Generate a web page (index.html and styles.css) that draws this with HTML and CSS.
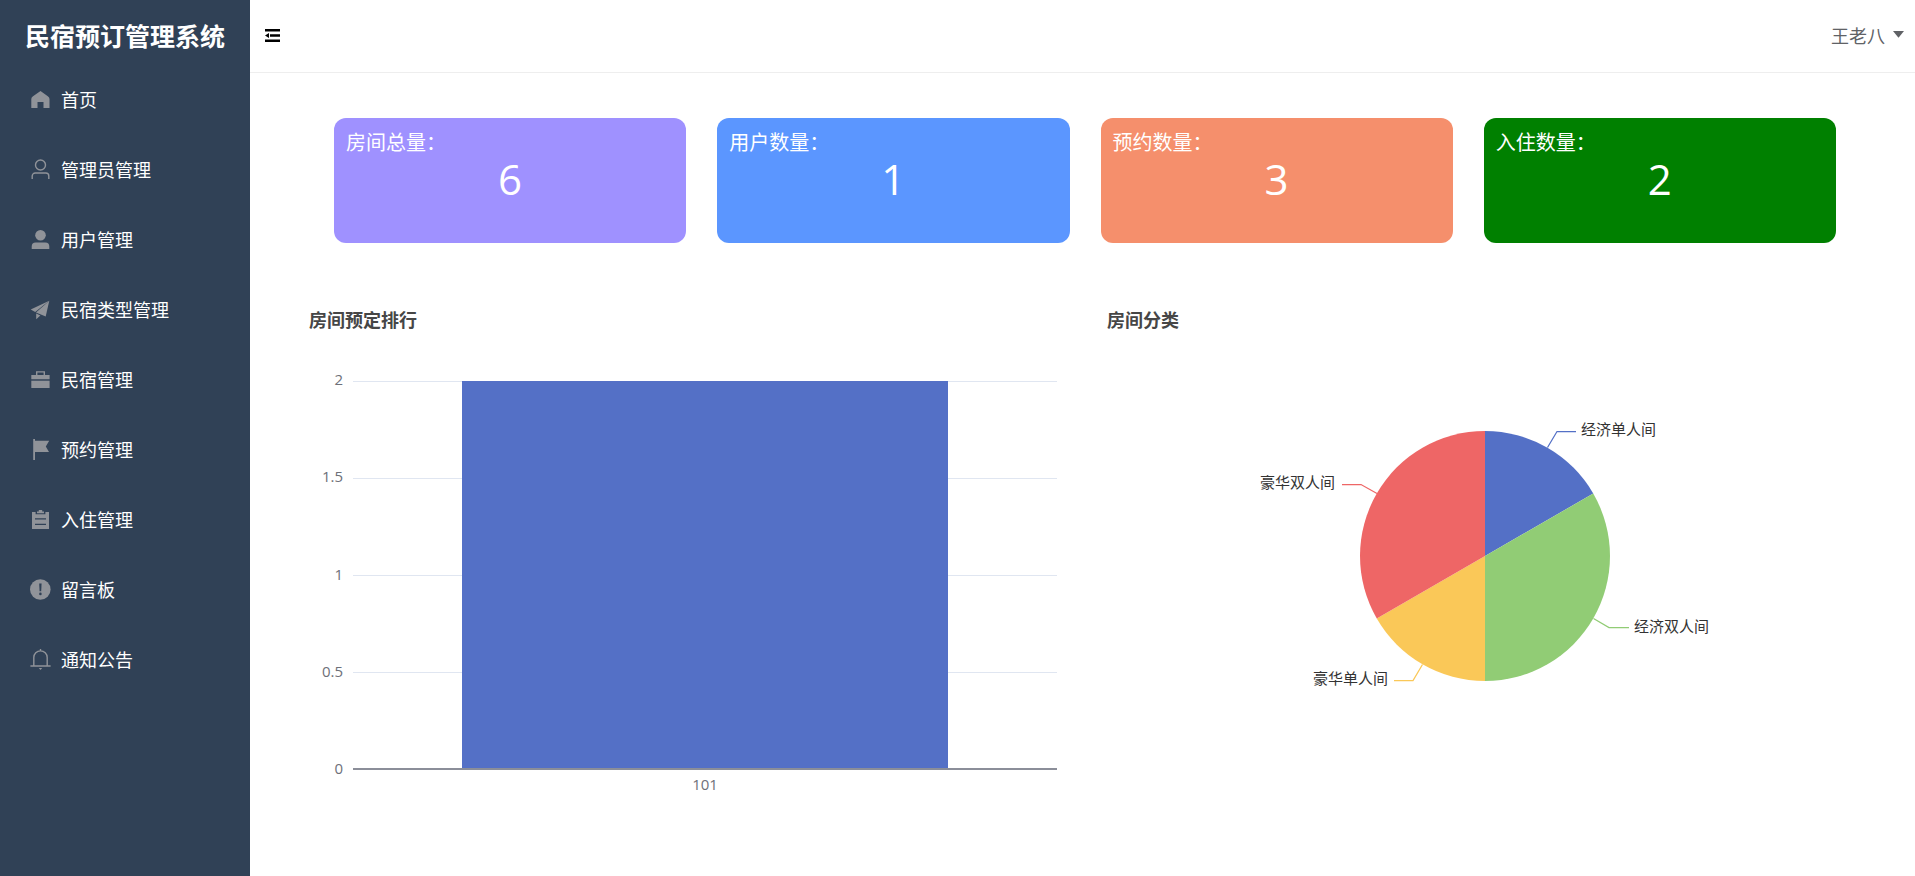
FILE: index.html
```html
<!DOCTYPE html>
<html lang="zh-CN">
<head>
<meta charset="utf-8">
<title>民宿预订管理系统</title>
<link rel="stylesheet" href="styles.css">
</head>
<body>
<div class="layout">
  <aside class="sidebar">
    <h1 class="brand">民宿预订管理系统</h1>
    <nav class="menu">
      <a class="menu-item" href="#home">
        <svg class="icon" viewBox="0 0 22 22"><path d="M11.5 2 18.8 7.2Q20.5 8.4 20.5 10V19H14.5V13H8.5V19H2.3V10Q2.3 8.4 4 7.2z"/></svg>
        <span>首页</span>
      </a>
      <a class="menu-item" href="#admins">
        <svg class="icon line" viewBox="0 0 22 22"><circle cx="11.5" cy="6" r="5"/><path d="M3.2 20V17a3 3 0 0 1 3-3h10.6a3 3 0 0 1 3 3V20"/></svg>
        <span>管理员管理</span>
      </a>
      <a class="menu-item" href="#users">
        <svg class="icon" viewBox="0 0 22 22"><circle cx="11.5" cy="6.2" r="5.3"/><path d="M2.7 20V17.5a4 4 0 0 1 4-4h9.6a4 4 0 0 1 4 4V20z"/></svg>
        <span>用户管理</span>
      </a>
      <a class="menu-item" href="#types">
        <svg class="icon" viewBox="0 0 22 22"><path d="M20.3 1.7 1.7 10.6 6.2 13z"/><path d="M20.3 1.7 7 13.6 16.7 17.5z"/><path d="M7.2 14.6 11.4 16.6 7.2 20.3z"/></svg>
        <span>民宿类型管理</span>
      </a>
      <a class="menu-item" href="#rooms">
        <svg class="icon" viewBox="0 0 22 22"><path d="M7 6V2.3h9V6h4.6v4.2H2.3V6zM8.4 6h6.2V3.6H8.4z" fill-rule="evenodd"/><path d="M2.3 11.7h18.3V19H2.3z"/></svg>
        <span>民宿管理</span>
      </a>
      <a class="menu-item" href="#reservations">
        <svg class="icon" viewBox="0 0 22 22"><path d="M4.2 0h1.8v1.7H20.2L16.8 7.4 20 13H6v8H4.2z"/></svg>
        <span>预约管理</span>
      </a>
      <a class="menu-item" href="#checkins">
        <svg class="icon" viewBox="0 0 22 22"><path d="M3 3h3.6v2.3h9.8V3H20v17H3zM6 9.2v1.2h11V9.2zM6 14.7v1.2h11v-1.2z" fill-rule="evenodd"/><path d="M8 2.4h1.8V1h3.4v1.4H15v1.9H8z"/></svg>
        <span>入住管理</span>
      </a>
      <a class="menu-item" href="#messages">
        <svg class="icon" viewBox="0 0 22 22"><circle cx="11.3" cy="10.5" r="10.3"/><path class="mark" d="M10.2 4.6h2.4l-.4 7.6h-1.6z"/><circle class="mark" cx="11.4" cy="14.9" r="1.3"/></svg>
        <span>留言板</span>
      </a>
      <a class="menu-item" href="#notices">
        <svg class="icon line" viewBox="0 0 22 22"><path d="M4.8 16.7V8.6a6.7 6.7 0 0 1 13.4 0v8.1M1.4 17h20.2M11.5 0v2"/><path class="solid" d="M9.8 19h3.4l-1.7 2z"/></svg>
        <span>通知公告</span>
      </a>
    </nav>
  </aside>

  <div class="page">
    <header class="topbar">
      <button class="collapse" type="button" aria-label="收起菜单">
        <svg class="collapse-icon" viewBox="0 0 16 14"><path d="M0 0h15v2.6H0zM5 5.2h10v2.6H5zM0 10.4h15V13H0zM0 6.5 4 3.9v5.2z"/></svg>
      </button>
      <button class="account" type="button">
        <span>王老八</span>
        <svg class="caret" viewBox="0 0 11 7"><path d="M0 0h11L5.5 6.8z"/></svg>
      </button>
    </header>

    <main class="content">
      <section class="stats">
        <article class="stat rooms"><h2 class="stat-label">房间总量：</h2><p class="stat-value">6</p></article>
        <article class="stat users"><h2 class="stat-label">用户数量：</h2><p class="stat-value">1</p></article>
        <article class="stat bookings"><h2 class="stat-label">预约数量：</h2><p class="stat-value">3</p></article>
        <article class="stat checkins"><h2 class="stat-label">入住数量：</h2><p class="stat-value">2</p></article>
      </section>

      <section class="charts">
        <figure class="chart">
          <figcaption class="chart-title">房间预定排行</figcaption>
          <div class="bar-chart">
            <div class="y-axis"><span>2</span><span>1.5</span><span>1</span><span>0.5</span><span>0</span></div>
            <div class="plot"><div class="bar"></div></div>
            <div class="x-axis">101</div>
          </div>
        </figure>
        <figure class="chart">
          <figcaption class="chart-title">房间分类</figcaption>
          <svg class="pie" viewBox="0 0 500 280" role="img" aria-label="房间分类">
            <path fill="#5470c6" d="M250 140V15A125 125 0 0 1 358.25 77.5z"/>
            <path fill="#91cc75" d="M250 140 358.25 77.5A125 125 0 0 1 250 265z"/>
            <path fill="#fac858" d="M250 140V265A125 125 0 0 1 141.75 202.5z"/>
            <path fill="#ee6666" d="M250 140 141.75 202.5A125 125 0 0 1 250 15z"/>
            <g class="leader">
              <path stroke="#5470c6" d="M312.5 31.5 322 15.5H341"/>
              <path stroke="#91cc75" d="M358.5 202.5 374 211.5H394"/>
              <path stroke="#fac858" d="M187.5 248.5 178 264.5H159"/>
              <path stroke="#ee6666" d="M142 77.5 126 68.5H107"/>
            </g>
            <g class="pie-label">
              <text x="346" y="19">经济单人间</text>
              <text x="399" y="216">经济双人间</text>
              <text class="end" x="153" y="268">豪华单人间</text>
              <text class="end" x="100" y="72">豪华双人间</text>
            </g>
          </svg>
        </figure>
      </section>
    </main>
  </div>
</div>
</body>
</html>
```

FILE: styles.css
```css
* { box-sizing: border-box; }

body {
  margin: 0;
  background: #fff;
  font-family: "Open Sans", "Noto Sans CJK SC", sans-serif;
  font-size: 18px;
}

h1, h2, p, figure { margin: 0; }

button {
  padding: 0;
  border: 0;
  background: none;
  font: inherit;
  cursor: pointer;
}

.layout {
  display: grid;
  grid-template-columns: 250px 1fr;
  min-height: 100vh;
}

/* Sidebar */
.sidebar { background: #304156; color: #fff; }

.brand {
  height: 65px;
  padding-top: 8px;
  font-size: 25px;
  line-height: 56px;
  text-align: center;
}

.menu-item {
  display: flex;
  align-items: center;
  gap: 10px;
  height: 70px;
  padding-left: 29px;
  color: #fff;
  text-decoration: none;
}

.menu-item span { padding-bottom: 2px; }

.icon { width: 22px; height: 22px; fill: #909399; overflow: visible; }
.icon.line { fill: none; stroke: #909399; stroke-width: 1.4; }
.icon .solid { fill: #909399; stroke: none; }
.icon .mark { fill: #304156; }

/* Top bar */
.topbar {
  display: flex;
  align-items: center;
  justify-content: space-between;
  height: 73px;
  padding: 0 11px 0 15px;
  border-bottom: 1px solid #eee;
}

.collapse { display: flex; }
.collapse-icon { width: 16px; height: 14px; }

.account {
  display: flex;
  align-items: center;
  gap: 8px;
  padding-bottom: 3px;
  color: #606266;
}

.caret { width: 11px; height: 7px; fill: #606266; }

/* Totals */
.stats {
  display: grid;
  grid-template-columns: repeat(4, 1fr);
  gap: 31px;
  padding: 45px 79px 0 84px;
}

.stat {
  height: 125px;
  padding: 12px;
  border-radius: 12px;
  color: #fff;
}

.stat-label { font-size: 20px; font-weight: 400; line-height: 26px; }
.stat-value { font-size: 42px; font-weight: 500; line-height: 46px; text-align: center; }

.rooms { background: #9f91ff; }
.users { background: #5b96ff; }
.bookings { background: #f58f6c; }
.stat.checkins { background: #008000; }

/* Charts */
.charts {
  display: grid;
  grid-template-columns: repeat(2, 1fr);
  gap: 31px;
  padding: 64px 47px 0 53px;
}

.chart-title {
  padding-left: 6px;
  color: #464646;
  font-weight: 700;
  line-height: 26px;
}

.bar-chart {
  display: grid;
  grid-template-columns: 40px 1fr;
  column-gap: 10px;
  padding: 36px 13px 0 0;
  color: #6e7079;
  font-size: 15px;
  line-height: 20px;
}

.y-axis {
  display: flex;
  flex-direction: column;
  justify-content: space-between;
  margin-bottom: -8px;
  text-align: right;
}

.plot {
  display: flex;
  justify-content: center;
  height: 401px;
  padding-top: 12px;
  border-bottom: 2px solid #8b8e99;
  background: linear-gradient(#e0e6f1 1px, transparent 1px) 0 12px / 100% 97px;
}

.bar { width: 69%; background: #5470c6; }

.x-axis { grid-column: 2; padding-top: 4px; text-align: center; }

.pie {
  display: block;
  width: 500px;
  height: 280px;
  margin: 83px auto 0;
}

.leader { fill: none; stroke-width: 1.25; }
.pie-label { fill: #333; font-size: 15px; }
.pie-label .end { text-anchor: end; }
```
